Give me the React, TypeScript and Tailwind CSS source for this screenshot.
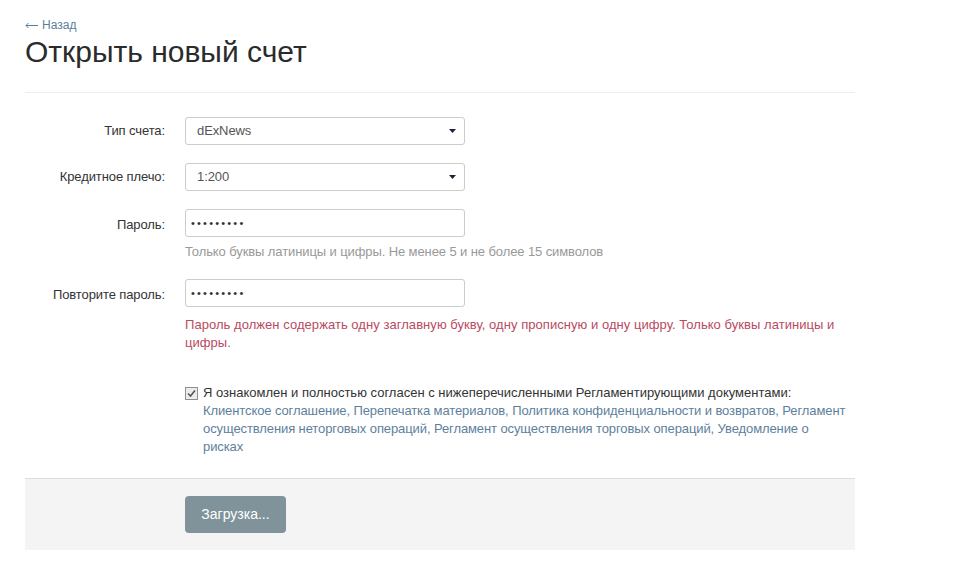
import React from "react";

function Select({ value }: { value: string }) {
  return (
    <div className="flex h-[28px] w-[280px] items-center justify-between rounded-[3px] border border-[#cccccc] bg-white pl-[11px] pr-[8px] text-[13px] tracking-[-0.1px] text-[#555]">
      <span>{value}</span>
      <svg width="7" height="4" viewBox="0 0 7 4"><path d="M0 0 L7 0 L3.5 4 Z" fill="#1e2240" /></svg>
    </div>
  );
}

function Pwd() {
  return (
    <div className="flex h-[28px] w-[280px] items-center rounded-[3px] border border-[#cccccc] bg-white pl-[5px] text-[11px] tracking-[2.2px] text-[#333]">
      •••••••••
    </div>
  );
}

export default function App() {
  return (
    <div className="min-h-[582px] bg-white font-['Liberation_Sans',Arial,sans-serif]">
      <div className="ml-[25px] w-[830px] pt-[17px]">
        <div className="flex items-center text-[12px] leading-[16px] text-[#5a7f9c]">
          <svg width="13" height="7" viewBox="0 0 13 7" className="mr-[4px]"><path d="M13 3.5 H1 M3.5 1 L1 3.5 L3.5 6" stroke="#5a7f9c" strokeWidth="1" fill="none" /></svg>
          Назад
        </div>
        <h1 className="mt-[1px] text-[30px] leading-[36px] text-[#2b2b2b]">Открыть новый счет</h1>
        <div className="mt-[22px] border-t border-[#eeeeee]" />
        <div className="pt-[24px] tracking-[-0.1px]">
          <div className="flex items-center">
            <div className="w-[140px] text-right text-[13px] text-[#333]">Тип счета:</div>
            <div className="ml-[20px]"><Select value="dExNews" /></div>
          </div>
          <div className="mt-[18px] flex items-center">
            <div className="w-[140px] text-right text-[13px] text-[#333]">Кредитное плечо:</div>
            <div className="ml-[20px]"><Select value="1:200" /></div>
          </div>
          <div className="mt-[18px] flex items-start">
            <div className="w-[140px] pt-[6px] text-right text-[13px] text-[#333]">Пароль:</div>
            <div className="ml-[20px]">
              <Pwd />
              <div className="mt-[6px] text-[13px] leading-[18px] text-[#999]">Только буквы латиницы и цифры. Не менее 5 и не более 15 символов</div>
            </div>
          </div>
          <div className="mt-[18px] flex items-start">
            <div className="w-[140px] pt-[6px] text-right text-[13px] text-[#333]">Повторите пароль:</div>
            <div className="ml-[20px] w-[660px]">
              <Pwd />
              <div className="mt-[9px] text-[13px] leading-[18px] tracking-[0.05px] text-[#b94a62]">Пароль должен содержать одну заглавную букву, одну прописную и одну цифру. Только буквы латиницы и цифры.</div>
            </div>
          </div>
          <div className="ml-[160px] mt-[32px] w-[670px]">
            <div className="flex items-start">
              <div className="mt-[3px] flex h-[13px] w-[13px] items-center justify-center border border-[#8f8f8f] bg-[#ececec]">
                <svg width="9" height="9" viewBox="0 0 9 9"><path d="M1 4.5 L3.5 7 L8 1.5" stroke="#555" strokeWidth="1.6" fill="none" /></svg>
              </div>
              <div className="ml-[5px] text-[13px] leading-[18px] tracking-[0px] text-[#333]">Я ознакомлен и полностью согласен с нижеперечисленными Регламентирующими документами:</div>
            </div>
            <div className="ml-[18px] w-[645px] text-[13px] leading-[18px] text-[#5e7f9c]">
              Клиентское соглашение, Перепечатка материалов, Политика конфиденциальности и возвратов, Регламент осуществления неторговых операций, Регламент осуществления торговых операций, Уведомление о рисках
            </div>
          </div>
        </div>
        <div className="mt-[22px] border-t border-[#dddddd] bg-[#f4f4f4] pb-[17px] pt-[17px] pl-[160px]">
          <div className="flex h-[37px] w-[101px] items-center justify-center rounded-[4px] bg-[#80939b] text-[14px] text-white">Загрузка...</div>
        </div>
      </div>
    </div>
  );
}
